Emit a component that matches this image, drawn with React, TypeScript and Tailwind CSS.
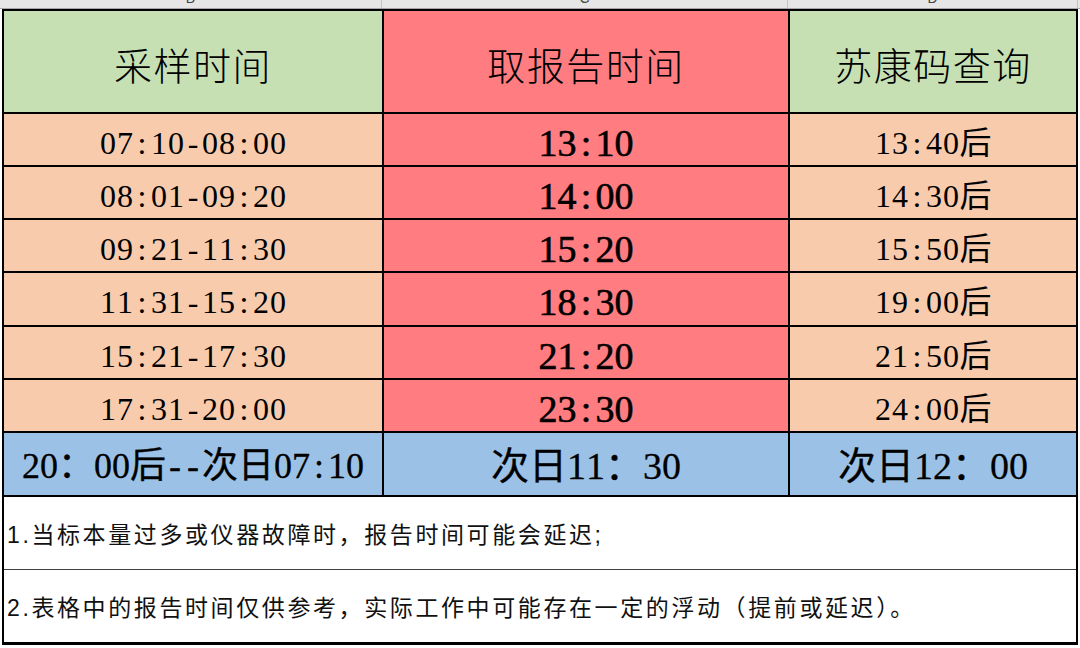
import React from "react";

const rows = [
  { sample: "07:10-08:00", report: "13:10", code: "13:40后" },
  { sample: "08:01-09:20", report: "14:00", code: "14:30后" },
  { sample: "09:21-11:30", report: "15:20", code: "15:50后" },
  { sample: "11:31-15:20", report: "18:30", code: "19:00后" },
  { sample: "15:21-17:30", report: "21:20", code: "21:50后" },
  { sample: "17:31-20:00", report: "23:30", code: "24:00后" },
];

// spreadsheet style: every half-width char takes the same cell
const Mono = ({ text, cell }: { text: string; cell: string }) => (
  <span className="inline-flex items-baseline">
    {text.split("").map((ch, i) =>
      ch.charCodeAt(0) < 128 ? (
        <span key={i} className={`inline-block text-center ${cell}`}>
          {ch}
        </span>
      ) : (
        <span key={i}>{ch}</span>
      )
    )}
  </span>
);

const serif = "font-['Liberation_Serif','Noto_Sans_CJK_SC',serif]";
const head = "flex items-center justify-center pt-[4px] text-[38px] font-light font-['Noto_Sans_CJK_SC',sans-serif] tracking-[1.5px]";

const App = () => {
  return (
    <div className="w-[1080px] h-[648px] bg-white overflow-hidden text-black">
      {/* column letters strip */}
      <div className="h-[9px] bg-[#e6e6e6] border-b border-[#a6a6a6] grid grid-cols-[382px_406px_290px_2px] font-['Liberation_Sans',sans-serif] text-[14px] text-[#444]">
        <div className="overflow-hidden flex justify-center border-r border-[#c4c4c4]">
          <span className="leading-none -mt-[9px]">B</span>
        </div>
        <div className="overflow-hidden flex justify-center border-r border-[#c4c4c4]">
          <span className="leading-none -mt-[9px]">C</span>
        </div>
        <div className="overflow-hidden flex justify-center border-r border-[#c4c4c4]">
          <span className="leading-none -mt-[9px]">D</span>
        </div>
        <div />
      </div>

      <div className="ml-[2px] w-[1076px] border-2 border-b-[3px] border-black">
        <div className="grid grid-cols-[378px_404px_286px] grid-rows-[101px_51px_51px_51px_52px_51px_51px_62px] gap-[2px] bg-black">
          <div className={`bg-[#c6e0b4] ${head}`}>采样时间</div>
          <div className={`bg-[#ff7c80] ${head}`}>取报告时间</div>
          <div className={`bg-[#c6e0b4] ${head}`}>苏康码查询</div>

          {rows.map((r) => (
            <React.Fragment key={r.sample}>
              <div className={`bg-[#f8cbad] flex items-center justify-center pt-[6px] text-[32px] leading-none ${serif}`}>
                <Mono text={r.sample} cell="w-[17px]" />
              </div>
              <div className={`bg-[#ff7c80] flex items-center justify-center pt-[6px] text-[38px] leading-none [-webkit-text-stroke:0.6px_black] ${serif}`}>
                <Mono text={r.report} cell="w-[19px]" />
              </div>
              <div className={`bg-[#f8cbad] flex items-center justify-center pt-[6px] text-[32px] leading-none ${serif}`}>
                <Mono text={r.code} cell="w-[17px]" />
              </div>
            </React.Fragment>
          ))}

          <div className={`bg-[#9bc2e6] flex items-center justify-center pt-[4px] text-[36px] leading-none [-webkit-text-stroke:0.3px_black] ${serif}`}>
            <Mono text="20：00后--次日07:10" cell="w-[18px]" />
          </div>
          <div className={`bg-[#9bc2e6] flex items-center justify-center pt-[4px] text-[38px] leading-none [-webkit-text-stroke:0.3px_black] ${serif}`}>
            <Mono text="次日11：30" cell="w-[19px]" />
          </div>
          <div className={`bg-[#9bc2e6] flex items-center justify-center pt-[4px] text-[38px] leading-none [-webkit-text-stroke:0.3px_black] ${serif}`}>
            <Mono text="次日12：00" cell="w-[19px]" />
          </div>
        </div>

        <div className="border-t-2 border-black bg-white font-['Liberation_Sans','Noto_Sans_CJK_SC',sans-serif] text-[23px] tracking-[2.6px] text-[#111]">
          <div className="h-[73px] flex items-center pl-[3px] pt-[5px] border-b border-[#404040]">
            1.当标本量过多或仪器故障时，报告时间可能会延迟;
          </div>
          <div className="h-[72px] flex items-center pl-[3px] pt-[4px]">
            2.表格中的报告时间仅供参考，实际工作中可能存在一定的浮动（提前或延迟）。
          </div>
        </div>
      </div>
    </div>
  );
};

export default App;
